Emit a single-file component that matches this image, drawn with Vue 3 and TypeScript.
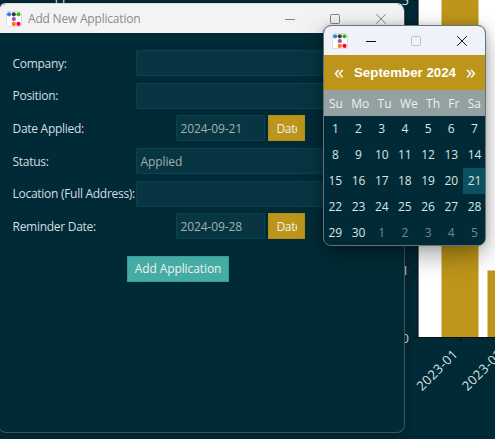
<script setup lang="ts">
interface Field { label: string; kind: 'text' | 'date'; value: string }

const fields: Field[] = [
  { label: 'Company:', kind: 'text', value: '' },
  { label: 'Position:', kind: 'text', value: '' },
  { label: 'Date Applied:', kind: 'date', value: '2024-09-21' },
  { label: 'Status:', kind: 'text', value: 'Applied' },
  { label: 'Location (Full Address):', kind: 'text', value: '' },
  { label: 'Reminder Date:', kind: 'date', value: '2024-09-28' },
]
const weekdays = ['Su', 'Mo', 'Tu', 'We', 'Th', 'Fr', 'Sa']
const days = Array.from({ length: 35 }, (_, i) => ({
  n: i < 30 ? i + 1 : i - 29,
  muted: i >= 30,
  selected: i === 20,
}))
const dots = [
  { x: 3.1, y: 3.3, c: '#2f7fe6' },
  { x: 7.8, y: 3.3, c: '#383d42' },
  { x: 12.5, y: 3.3, c: '#3fb618' },
  { x: 7.8, y: 8.1, c: '#9954bb' },
  { x: 7.8, y: 12.9, c: '#ff7518' },
  { x: 12.5, y: 12.9, c: '#ff0039' },
]
</script>

<template>
  <main class="desktop">
    <svg class="chart" width="495" height="439" viewBox="0 0 495 439">
      <rect x="418" y="0" width="77" height="337.5" fill="#fff" />
      <rect x="441.5" y="0" width="37" height="337.5" fill="#bd951a" />
      <rect x="487.5" y="270.5" width="8" height="67" fill="#bd951a" />
      <path d="M418 0V337.5H495M413.5 270.3H418M413.5 337.5H418M460.5 337.5V342.5M413.5 0.5H418" fill="none" stroke="#081014" stroke-width="1.1" />
      <g class="axis">
        <text x="409" y="5" text-anchor="end">5</text>
        <text x="409" y="275.3" text-anchor="end">1</text>
        <text x="409" y="343" text-anchor="end">0</text>
        <text transform="translate(422 391.6) rotate(-45)" textLength="51.5">2023-01</text>
        <text transform="translate(467.4 391.6) rotate(-45)" textLength="51.5">2023-02</text>
        <text x="47" y="-0.4" textLength="62">Application</text>
      </g>
    </svg>

    <section class="window form-window">
      <header class="titlebar">
        <svg class="logo" width="16" height="16" viewBox="0 0 16 16">
          <rect x=".5" y=".5" width="15" height="15" rx="1" fill="#fff" stroke="#ddd" />
          <circle v-for="d in dots" :key="`${d.x}-${d.y}`" :cx="d.x" :cy="d.y" r="2.1" :fill="d.c" />
        </svg>
        <h1>Add New Application</h1>
        <svg class="controls" width="107" height="14" viewBox="0 0 107 14" fill="none" stroke="#858585">
          <path d="M0 7.5H10M91.2 2L100.8 11.8M100.8 2L91.2 11.8" />
          <rect x="45.5" y="2.5" width="9" height="9" rx="1" />
        </svg>
      </header>
      <form class="form" @submit.prevent>
        <div v-for="f in fields" :key="f.label" class="row">
          <label>{{ f.label }}</label>
          <div v-if="f.kind === 'text'" class="box">{{ f.value }}</div>
          <div v-else class="date-group">
            <div class="box date">{{ f.value }}</div>
            <button class="date-button" type="button"><span>Date</span></button>
          </div>
        </div>
        <button class="submit" type="submit">Add Application</button>
      </form>
    </section>

    <section class="window calendar">
      <header class="titlebar">
        <svg class="logo" width="16" height="16" viewBox="0 0 16 16">
          <rect x=".5" y=".5" width="15" height="15" rx="1" fill="#fff" stroke="#ddd" />
          <circle v-for="d in dots" :key="`${d.x}-${d.y}`" :cx="d.x" :cy="d.y" r="2.1" :fill="d.c" />
        </svg>
        <svg class="controls" width="107" height="14" viewBox="0 0 107 14" fill="none" stroke="#111">
          <path d="M0 7.5H10M91.2 2.2L100.8 11.8M100.8 2.2L91.2 11.8" />
          <rect x="45.5" y="2.5" width="9" height="9" rx="1" stroke="#c0c1c8" />
        </svg>
      </header>
      <div class="month">
        <span class="arrow">«</span><strong>September 2024</strong><span class="arrow">»</span>
      </div>
      <div class="weekdays"><span v-for="w in weekdays" :key="w">{{ w }}</span></div>
      <div class="days">
        <span v-for="(d, i) in days" :key="i" :class="{ muted: d.muted, selected: d.selected }">{{ d.n }}</span>
      </div>
    </section>
  </main>
</template>

<style>
body { margin: 0; overflow: hidden; }
</style>

<style scoped>
* { box-sizing: border-box; }
.desktop { position: relative; width: 495px; height: 439px; overflow: hidden; background: #002b36; font: 12px "Open Sans", "Noto Sans", sans-serif; }
.chart { display: block; }
.axis { font-size: 13px; fill: #d9e0e3; }
.window { position: absolute; overflow: hidden; background: #002b36; border: 1px solid #41555c; border-radius: 8px; }
.form-window { left: -2px; top: 3px; width: 407px; height: 430px; border-top-color: #d8dadb; box-shadow: 0 4px 13px rgba(0, 0, 0, .28); }
.titlebar { display: flex; align-items: center; }
.form-window .titlebar { height: 29px; padding-left: 7px; background: #f3f3f3; }
.logo { flex: none; }
h1 { flex: none; width: 250px; margin: 0 0 0 6px; font-size: 12px; font-weight: 400; letter-spacing: -.2px; color: #8b8b8b; white-space: nowrap; }
.controls { flex: none; }
.form-window .controls { margin-left: 7px; }
.form { padding: 17px 13px 0 13.5px; color: #d5dee0; }
.row { display: grid; grid-template-columns: 123.5px 1fr; align-items: center; height: 26px; margin-bottom: 6.7px; }
label { white-space: nowrap; letter-spacing: -.28px; }
.box { height: 26px; padding: 0 3.5px; border: 1px solid #084350; border-radius: 1px; background: #073642; color: #a1afb0; line-height: 25px; letter-spacing: -.1px; }
.date-group { display: flex; gap: 3px; padding-left: 40px; }
.date { width: 89px; letter-spacing: -.12px; }
button { border: 0; font: inherit; color: #f0f1eb; }
.date-button { width: 36.5px; height: 26px; padding: 0 7px 0 7.5px; background: #bd951a; border: 1px solid #b58d18; }
.date-button span { display: block; width: 20.5px; overflow: hidden; text-align: left; white-space: nowrap; letter-spacing: -.35px; }
.submit { display: block; width: 102px; height: 26px; margin: 16.3px 0 0 114.5px; padding: 0; background: #44aca4; border: 1px solid #389d97; letter-spacing: -.1px; white-space: nowrap; }
.calendar { left: 323px; top: 25px; width: 163px; height: 221px; border-color: #667377; box-shadow: 0 9px 24px rgba(0, 0, 0, .35), 0 0 7px rgba(0, 0, 0, .15); }
.calendar .titlebar { height: 29px; padding-left: 8px; background: #f0f2f9; }
.calendar .controls { margin-left: 18px; }
.month { display: flex; align-items: center; justify-content: space-between; height: 35px; padding: 0 9px 0 10px; background: #bd951a; color: #fff; }
.month strong { font: 700 13.3px "Liberation Sans", sans-serif; white-space: nowrap; }
.arrow { font-size: 20px; line-height: 30px; padding-bottom: 2px; }
.weekdays { display: flex; justify-content: space-between; height: 26px; padding: 0 4px 0 5px; line-height: 27px; background: #93a1a1; color: #eef0ee; }
.days { display: grid; grid-template-columns: repeat(7, 23.2px); text-align: center; grid-auto-rows: 26px; line-height: 26px; color: #dce3e4; letter-spacing: -.1px; }
.days span { padding-right: .6px; }
.days .muted { color: #75868b; }
.selected { background: #0b5162; }
</style>
